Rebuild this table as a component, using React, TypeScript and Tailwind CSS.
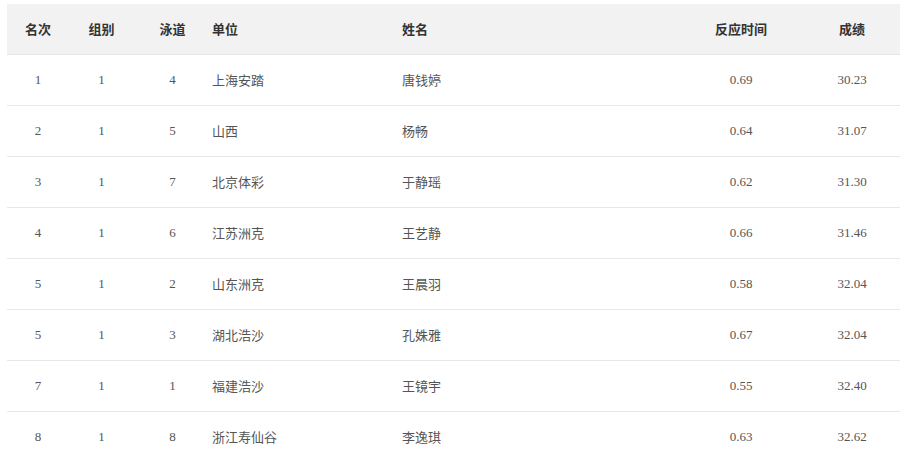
const rows = [
  { rank: "1", group: "1", lane: "4", team: "上海安踏", name: "唐钱婷", rt: "0.69", score: "30.23" },
  { rank: "2", group: "1", lane: "5", team: "山西", name: "杨畅", rt: "0.64", score: "31.07" },
  { rank: "3", group: "1", lane: "7", team: "北京体彩", name: "于静瑶", rt: "0.62", score: "31.30" },
  { rank: "4", group: "1", lane: "6", team: "江苏洲克", name: "王艺静", rt: "0.66", score: "31.46" },
  { rank: "5", group: "1", lane: "2", team: "山东洲克", name: "王晨羽", rt: "0.58", score: "32.04" },
  { rank: "5", group: "1", lane: "3", team: "湖北浩沙", name: "孔姝雅", rt: "0.67", score: "32.04" },
  { rank: "7", group: "1", lane: "1", team: "福建浩沙", name: "王镜宇", rt: "0.55", score: "32.40" },
  { rank: "8", group: "1", lane: "8", team: "浙江寿仙谷", name: "李逸琪", rt: "0.63", score: "32.62" },
];

const grid = "grid grid-cols-[62px_65px_77px_191px_275px_128px_94px] items-center";
const cjk = "font-['Microsoft_YaHei','Noto_Sans_CJK_SC',sans-serif]";
const num = "font-['Liberation_Serif','Noto_Sans_CJK_SC',serif]";

export default function App() {
  return (
    <div className="w-[900px] h-[460px] overflow-hidden bg-white pt-[4px] pl-[7px]">
      {/* 表头 */}
      <div className={`${grid} h-[51px] bg-[#f2f2f2] border-b border-[#e6e6e6] text-[13px] font-bold text-[#333] ${cjk}`}>
        <div className="text-center">名次</div>
        <div className="text-center">组别</div>
        <div className="text-center">泳道</div>
        <div className="pl-px">单位</div>
        <div>姓名</div>
        <div className="text-center">反应时间</div>
        <div className="text-center">成绩</div>
      </div>
      {rows.map((r, i) => (
        <div key={i} className={`${grid} h-[51px] border-b border-[#e8e8e8] text-[13px] text-[#555]`}>
          <div className={`text-center ${num}`}>{r.rank}</div>
          <div className={`text-center ${num}`}>{r.group}</div>
          <div className={`text-center ${num}`}>{r.lane}</div>
          <div className={`pl-px ${cjk}`}>{r.team}</div>
          <div className={cjk}>{r.name}</div>
          <div className={`text-center ${num}`}>{r.rt}</div>
          <div className={`text-center ${num}`}>{r.score}</div>
        </div>
      ))}
    </div>
  );
}
